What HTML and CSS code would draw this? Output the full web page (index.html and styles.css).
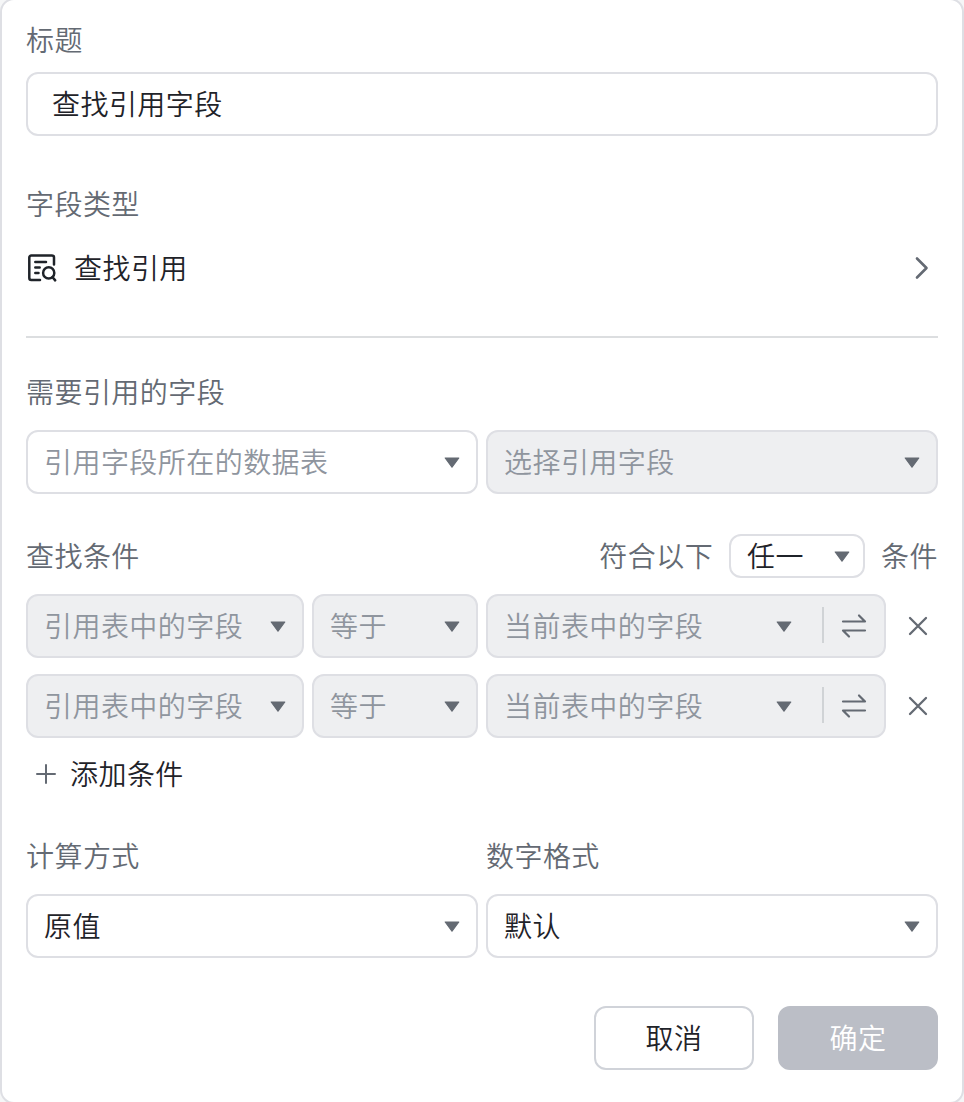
FILE: index.html
```html
<!DOCTYPE html>
<html lang="zh-CN">
<head>
    <meta charset="UTF-8">
    <meta name="viewport" content="width=device-width, initial-scale=1.0">
    <title>查找引用字段</title>
    <link rel="stylesheet" href="styles.css">
</head>
<body>
    <svg class="symbols" width="0" height="0">
        <symbol id="caret" viewBox="0 0 16 12">
            <path d="M1.2 1h13.6L8 10.2z" fill="currentColor" stroke="currentColor" stroke-width="1.2" stroke-linejoin="round"/>
        </symbol>
        <symbol id="swap" viewBox="0 0 28 28">
            <path d="M3 9.5h22l-6-6M25 18.5H3l6 6" fill="none" stroke="currentColor" stroke-width="2.2" stroke-linecap="round" stroke-linejoin="round"/>
        </symbol>
        <symbol id="close" viewBox="0 0 20 20">
            <path d="M2 2l16 16M18 2L2 18" fill="none" stroke="currentColor" stroke-width="2.3" stroke-linecap="round"/>
        </symbol>
    </svg>

    <div class="panel">
        <div class="label">标题</div>
        <div class="box title-input">查找引用字段</div>

        <div class="label type-label">字段类型</div>
        <div class="type-row">
            <svg class="type-icon" width="32" height="32" viewBox="0 0 32 32" fill="none" stroke="currentColor" stroke-width="2.5" stroke-linecap="round" stroke-linejoin="round">
                <path d="M28 12.5V5.5a2 2 0 0 0-2-2H5.300a2 2 0 0 0-2 2v20.500a2 2 0 0 0 2 2H14"/>
                <path d="M9.300 10H20M9.300 15.600h4.400M9.300 21h3.200"/>
                <circle cx="22.700" cy="20.900" r="5.600"/>
                <path d="M26.600 25.200l2.600 3.200"/>
            </svg>
            <span class="text">查找引用</span>
            <svg class="arrow" width="16" height="24" viewBox="0 0 16 24">
                <path d="M3 2.500l9.500 9.500L3 21.500" fill="none" stroke="currentColor" stroke-width="2.600" stroke-linecap="round" stroke-linejoin="round"/>
            </svg>
        </div>

        <div class="divider"></div>

        <div class="label">需要引用的字段</div>
        <div class="row ref-row">
            <div class="box select placeholder">引用字段所在的数据表<svg class="caret"><use href="#caret"/></svg></div>
            <div class="box select disabled">选择引用字段<svg class="caret"><use href="#caret"/></svg></div>
        </div>

        <div class="cond-head">
            <span class="text">查找条件</span>
            <div class="match">
                <span class="text">符合以下</span>
                <div class="box select small">任一<svg class="caret"><use href="#caret"/></svg></div>
                <span class="text">条件</span>
            </div>
        </div>

        <div class="row cond-row">
            <div class="box select disabled cond-field">引用表中的字段<svg class="caret"><use href="#caret"/></svg></div>
            <div class="box select disabled cond-op">等于<svg class="caret"><use href="#caret"/></svg></div>
            <div class="box select disabled cond-value">当前表中的字段<svg class="caret"><use href="#caret"/></svg><span class="sep"></span><svg class="swap"><use href="#swap"/></svg></div>
            <svg class="close"><use href="#close"/></svg>
        </div>
        <div class="row cond-row">
            <div class="box select disabled cond-field">引用表中的字段<svg class="caret"><use href="#caret"/></svg></div>
            <div class="box select disabled cond-op">等于<svg class="caret"><use href="#caret"/></svg></div>
            <div class="box select disabled cond-value">当前表中的字段<svg class="caret"><use href="#caret"/></svg><span class="sep"></span><svg class="swap"><use href="#swap"/></svg></div>
            <svg class="close"><use href="#close"/></svg>
        </div>

        <div class="add">
            <svg width="20" height="20" viewBox="0 0 20 20">
                <path d="M10 1v18M1 10h18" fill="none" stroke="currentColor" stroke-width="2" stroke-linecap="round"/>
            </svg>
            <span class="text">添加条件</span>
        </div>

        <div class="row format-row">
            <div class="col">
                <div class="label">计算方式</div>
                <div class="box select">原值<svg class="caret"><use href="#caret"/></svg></div>
            </div>
            <div class="col">
                <div class="label">数字格式</div>
                <div class="box select">默认<svg class="caret"><use href="#caret"/></svg></div>
            </div>
        </div>

        <div class="footer">
            <button class="btn">取消</button>
            <button class="btn btn-primary">确定</button>
        </div>
    </div>
</body>
</html>
```
FILE: styles.css
```css
* {
    box-sizing: border-box;
}
body {
    margin: 0;
    height: 1102px;
    overflow: hidden;
    background: #f5f6f7;
    font-family: "Noto Sans CJK SC", sans-serif;
    font-size: 28px;
    font-weight: 350;
    line-height: 38px;
    letter-spacing: 0.45px;
    color: #1f2329;
}
.symbols {
    position: absolute;
}
.panel {
    height: 1106px;
    margin-top: -2px;
    padding: 20px 24px 0;
    border: 2px solid #dedfe4;
    border-radius: 14px;
    background: #fff;
}
.label,
.cond-head {
    color: #646a73;
}
.label,
.text {
    height: 40px;
}
.box {
    display: flex;
    align-items: center;
    height: 64px;
    padding-bottom: 2px;
    border: 2px solid #dedfe4;
    border-radius: 12px;
    background: #fff;
    white-space: nowrap;
}
.title-input {
    margin-top: 12px;
    padding-left: 24px;
}
.type-label {
    margin-top: 48px;
}
.type-row {
    display: flex;
    align-items: center;
    height: 40px;
    margin-top: 24px;
}
.type-icon {
    margin-right: 16px;
}
.arrow {
    margin-left: auto;
    margin-right: 8px;
    color: #646a73;
}
.divider {
    height: 2px;
    margin: 48px 0 34px;
    background: #dcdee0;
}
.row {
    display: flex;
    gap: 8px;
}
.ref-row {
    margin-top: 18px;
}
.select {
    flex: 1;
    padding-left: 16px;
    padding-right: 16px;
}
.placeholder,
.disabled {
    color: #8f959e;
}
.disabled {
    background: #eeeff1;
}
.caret {
    width: 16px;
    height: 12px;
    margin-top: 4px;
    margin-left: auto;
    color: #646a73;
}
.cond-head {
    display: flex;
    align-items: center;
    justify-content: space-between;
    height: 44px;
    margin-top: 40px;
}
.match {
    display: flex;
    align-items: center;
    gap: 16px;
}
.small {
    flex: none;
    width: 136px;
    height: 44px;
    padding-right: 13px;
    color: #1f2329;
}
.cond-row {
    align-items: center;
    margin-top: 16px;
}
.cond-field {
    flex: none;
    width: 278px;
}
.cond-op {
    flex: none;
    width: 166px;
}
.cond-value {
    flex: none;
    width: 400px;
}
.sep {
    width: 2px;
    height: 36px;
    margin: 0 16px 0 30px;
    background: #d0d3d6;
}
.swap {
    width: 28px;
    height: 28px;
    margin-top: 2px;
    color: #646a73;
}
.close {
    width: 20px;
    height: 20px;
    margin-left: 14px;
    color: #646a73;
}
.add {
    display: flex;
    align-items: center;
    gap: 14px;
    height: 40px;
    margin-top: 16px;
    padding-left: 10px;
}
.add svg {
    color: #646a73;
}
.format-row {
    margin-top: 42px;
}
.col {
    flex: 1;
}
.col .box {
    margin-top: 18px;
}
.footer {
    display: flex;
    justify-content: flex-end;
    gap: 24px;
    margin-top: 48px;
}
.btn {
    width: 160px;
    height: 64px;
    padding: 0 0 2px;
    border: 2px solid #d0d3d9;
    border-radius: 12px;
    background: #fff;
    font: inherit;
    letter-spacing: inherit;
    color: #1f2329;
}
.btn-primary {
    border-color: #bbbec6;
    background: #bbbec6;
    color: #fff;
}
```
